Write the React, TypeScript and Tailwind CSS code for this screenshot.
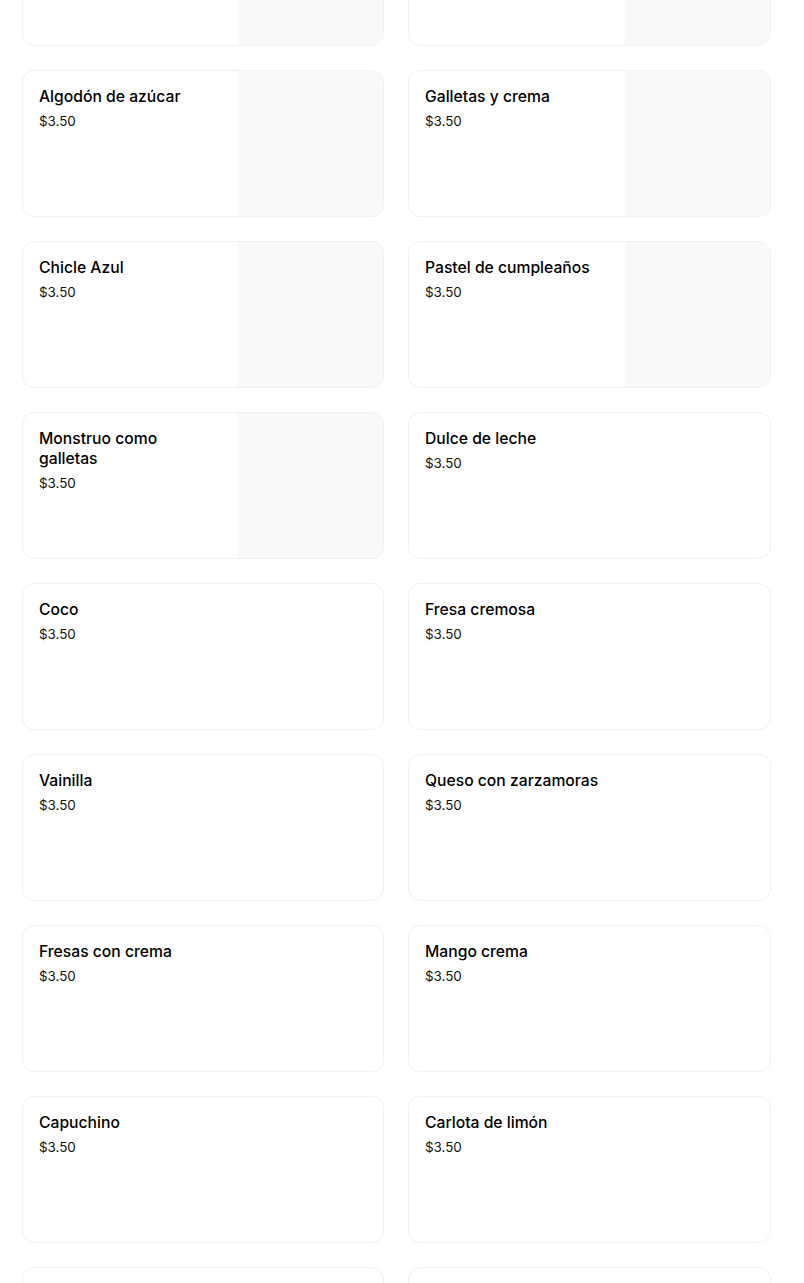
const items: { name: string; image: boolean }[] = [
  { name: "Chocolate", image: true },
  { name: "Nuez", image: true },
  { name: "Algodón de azúcar", image: true },
  { name: "Galletas y crema", image: true },
  { name: "Chicle Azul", image: true },
  { name: "Pastel de cumpleaños", image: true },
  { name: "Monstruo como galletas", image: true },
  { name: "Dulce de leche", image: false },
  { name: "Coco", image: false },
  { name: "Fresa cremosa", image: false },
  { name: "Vainilla", image: false },
  { name: "Queso con zarzamoras", image: false },
  { name: "Fresas con crema", image: false },
  { name: "Mango crema", image: false },
  { name: "Capuchino", image: false },
  { name: "Carlota de limón", image: false },
  { name: "Limón", image: false },
  { name: "Mamey", image: false },
];

function ItemCard({ name, image }: { name: string; image: boolean }) {
  return (
    <div className="flex h-[147px] overflow-hidden rounded-xl border border-[#f1f1f1] bg-white">
      <div className="flex-1 pl-4 pr-6 pt-4">
        <div className="text-[15.7px] font-medium leading-5 text-black">{name}</div>
        <div className="mt-[4px] text-[13.4px] leading-5 text-[#111]">$3.50</div>
      </div>
      {image && <div className="w-[145px] shrink-0 bg-[#f9f9f9]" />}
    </div>
  );
}

export default function App() {
  return (
    <div
      className="h-[1283px] overflow-hidden bg-white pl-[22px]"
      style={{ fontFamily: "Inter, 'Noto Sans', sans-serif" }}
    >
      <div className="-mt-[101px] grid grid-cols-[362px_363px] gap-x-6 gap-y-6">
        {items.map((it) => (
          <ItemCard key={it.name} name={it.name} image={it.image} />
        ))}
      </div>
    </div>
  );
}
